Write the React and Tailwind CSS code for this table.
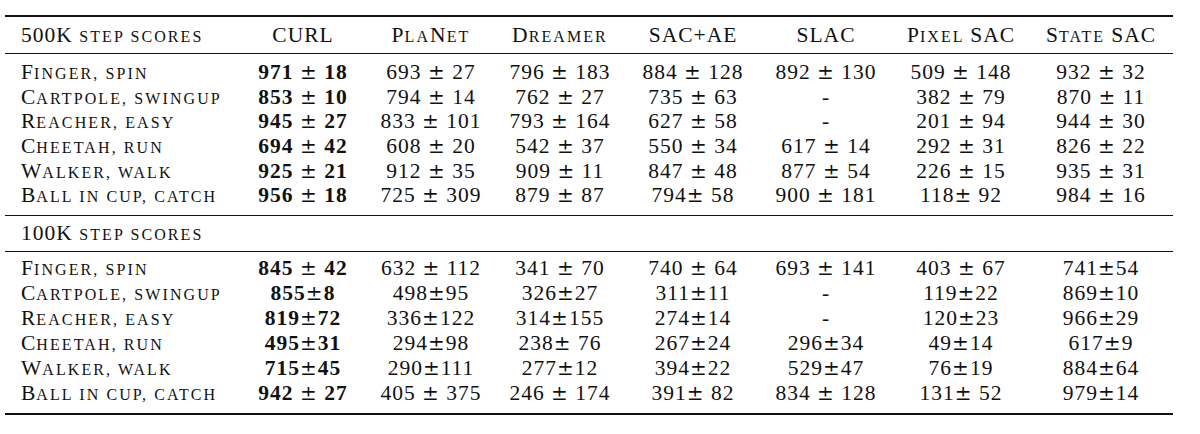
import React from 'react';

const COLS = 'grid grid-cols-[232px_132px_124px_134px_132px_134px_136px_144px]';

const HEAD = ['CURL', 'PlaNet', 'Dreamer', 'SAC+AE', 'SLAC', 'Pixel SAC', 'State SAC'];

const SCORES_500K = [
  ['Finger, spin',       ['971 ± 18', '693 ± 27', '796 ± 183', '884 ± 128', '892 ± 130', '509 ± 148', '932 ± 32']],
  ['Cartpole, swingup',  ['853 ± 10', '794 ± 14', '762 ± 27', '735 ± 63', '-', '382 ± 79', '870 ± 11']],
  ['Reacher, easy',      ['945 ± 27', '833 ± 101', '793 ± 164', '627 ± 58', '-', '201 ± 94', '944 ± 30']],
  ['Cheetah, run',       ['694 ± 42', '608 ± 20', '542 ± 37', '550 ± 34', '617 ± 14', '292 ± 31', '826 ± 22']],
  ['Walker, walk',       ['925 ± 21', '912 ± 35', '909 ± 11', '847 ± 48', '877 ± 54', '226 ± 15', '935 ± 31']],
  ['Ball in cup, catch', ['956 ± 18', '725 ± 309', '879 ± 87', '794± 58', '900 ± 181', '118± 92', '984 ± 16']],
];

const SCORES_100K = [
  ['Finger, spin',       ['845 ± 42', '632 ± 112', '341 ± 70', '740 ± 64', '693 ± 141', '403 ± 67', '741±54']],
  ['Cartpole, swingup',  ['855±8', '498±95', '326±27', '311±11', '-', '119±22', '869±10']],
  ['Reacher, easy',      ['819±72', '336±122', '314±155', '274±14', '-', '120±23', '966±29']],
  ['Cheetah, run',       ['495±31', '294±98', '238± 76', '267±24', '296±34', '49±14', '617±9']],
  ['Walker, walk',       ['715±45', '290±111', '277±12', '394±22', '529±47', '76±19', '884±64']],
  ['Ball in cup, catch', ['942 ± 27', '405 ± 375', '246 ± 174', '391± 82', '834 ± 128', '131± 52', '979±14']],
];

// LaTeX-style small caps: lowercase runs become smaller, spaced-out capitals
function SmallCaps({ text }) {
  const parts = text.split(/([a-z][a-z, ]*)/).filter(Boolean);
  return (
    <span className="whitespace-pre">
      {parts.map((p, i) =>
        /^[a-z]/.test(p) ? (
          <span key={i} className="text-[16px] leading-none uppercase tracking-[2.1px]">{p}</span>
        ) : (
          <span key={i}>{p}</span>
        )
      )}
    </span>
  );
}

// split on ± so the sign can be drawn wider, like the math glyph
function Score({ v, bold }) {
  if (!v.includes('±')) return <span>{v}</span>;
  const [a, b] = v.split('±');
  return (
    <span className={`whitespace-pre ${bold ? 'font-bold' : ''}`}>
      {a}
      <span className="font-['DejaVu_Serif',serif] font-normal text-[20px] leading-none">±</span>
      {b}
    </span>
  );
}

function Rows({ data, row }) {
  return data.map(([label, vals]) => (
    <div key={label} className={`${COLS} ${row} items-center`}>
      <div className="pl-4"><SmallCaps text={label} /></div>
      {vals.map((v, i) => (
        <div key={i} className="text-center">
          <Score v={v} bold={i === 0} />
        </div>
      ))}
    </div>
  ));
}

export default function App() {
  return (
    <div className="h-[434px] w-[1200px] bg-white pt-[15px] font-['Liberation_Serif',serif] text-[21.5px] leading-[24px] tracking-[1px] text-[#111]">
      <div className="ml-[5px] w-[1168px]">
        <div className="h-[2px] bg-[#111]" />
        <div className={`${COLS} h-[36px] items-center`}>
          <div className="pl-4"><SmallCaps text="500K step scores" /></div>
          {HEAD.map((h) => (
            <div key={h} className="text-center"><SmallCaps text={h} /></div>
          ))}
        </div>
        <div className="h-px bg-[#111]" />

        <div className="pt-[6px] pb-[7px]">
          <Rows data={SCORES_500K} row="h-[24.6px]" />
        </div>
        <div className="h-px bg-[#111]" />

        <div className="flex h-[35px] items-center pl-4"><SmallCaps text="100K step scores" /></div>
        <div className="h-px bg-[#111]" />

        <div className="pt-[4px] pb-[7px]">
          <Rows data={SCORES_100K} row="h-[25px]" />
        </div>
        <div className="h-[2px] bg-[#111]" />
      </div>
    </div>
  );
}
